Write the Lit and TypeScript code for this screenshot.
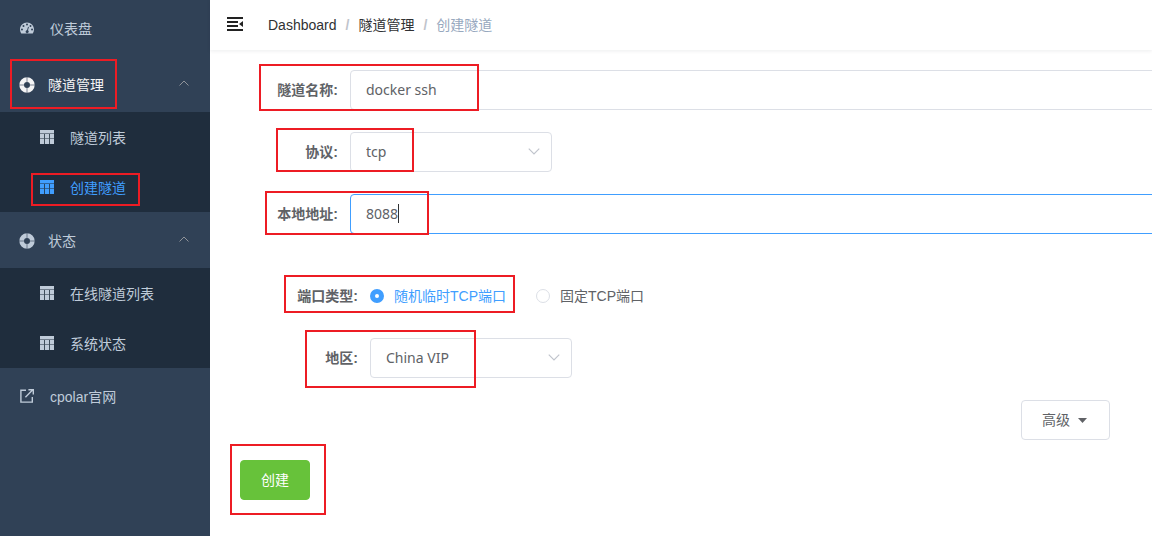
import { LitElement, html, css, svg } from "lit";
import { customElement, state } from "lit/decorators.js";
import { styleMap } from "lit/directives/style-map.js";
import { classMap } from "lit/directives/class-map.js";

const icons = {
  dashboard: html`<svg class="icon" viewBox="0 0 128 128" aria-hidden="true">
    <path fill-rule="evenodd" d="M64 14C29 14 0 42 0 77c0 12 4 24 10 34 1 2 3 3 5 3h98c2 0 4-1 5-3 6-10 10-22 10-34C128 42 99 14 64 14zM18 68a9 9 0 1 1 0 18 9 9 0 0 1 0-18zM32 36a9 9 0 1 1 0 18 9 9 0 0 1 0-18zM64 23a9 9 0 1 1 0 18 9 9 0 0 1 0-18zM96 36a9 9 0 1 1 0 18 9 9 0 0 1 0-18zM110 68a9 9 0 1 1 0 18 9 9 0 0 1 0-18zM78 52c2 1 3 3 3 5l-8 27c6 4 8 11 6 17-2 7-9 12-17 10-7-2-12-9-10-17 2-6 7-10 13-11l7-27c1-3 3-5 6-4z"/>
  </svg>`,
  ring: html`<svg class="icon ring" viewBox="0 0 16 16" aria-hidden="true">
    <path fill-rule="evenodd" d="M8 .3a7.700 7.700 0 1 1 0 15.400A7.700 7.700 0 0 1 8 .3zM8 5a3 3 0 1 0 0 6 3 3 0 0 0 0-6z"/>
    <path class="spokes" d="M8 0v5M8 11v5M0 8h5M11 8h5"/>
  </svg>`,
  table: html`<svg class="icon" viewBox="0 0 14 14" aria-hidden="true">
    <path d="M0 0h14v3H0zM0 4h4v4H0zM0 9h4v5H0zM5 4h4v4H5zM5 9h4v5H5zM10 4h4v4h-4zM10 9h4v5h-4z"/>
    <path opacity="0.5" d="M0 3h14v1H0zM0 8h4v1H0zM5 8h4v1H5zM10 8h4v1h-4z"/>
    <path opacity="0.2" d="M4 4h1v10H4zM9 4h1v10H9z"/>
  </svg>`,
  link: html`<svg class="icon" viewBox="0 0 14 14" fill="none" stroke="currentColor" stroke-width="1.4" aria-hidden="true">
    <path d="M6 1.3H.9v11.8h11.4V8M5.4 8.2l7.4-7.4M8.4.8h4.9v4.6"/>
  </svg>`,
};

const chevron = (cls: string, d: string) =>
  html`<svg class=${cls} viewBox="0 0 12 12" aria-hidden="true">${svg`<path d=${d} />`}</svg>`;

interface Mark { left: number; top: number; width: number; height: number }

const marks: Mark[] = [
  { left: 10, top: 59, width: 107, height: 50 },
  { left: 31, top: 173, width: 109, height: 33 },
  { left: 259, top: 64, width: 220, height: 47 },
  { left: 276, top: 128, width: 138, height: 44 },
  { left: 265, top: 191, width: 164, height: 44 },
  { left: 284, top: 275, width: 231, height: 38 },
  { left: 305, top: 330, width: 171, height: 58 },
  { left: 230, top: 444, width: 96, height: 71 },
];

@customElement("side-menu")
export class SideMenu extends LitElement {
  static styles = css`
    :host { display: block; background: #304156; color: #bfcbd9; font-size: 14px; }
    .list { list-style: none; margin: 0; padding: 0; }
    .item {
      box-sizing: border-box; width: 100%; height: 56px; padding: 2px 20px 0;
      display: flex; align-items: center; gap: 16px;
      border: 0; background: none; color: inherit; font: inherit;
      text-decoration: none; text-align: left; cursor: pointer;
    }
    .group { gap: 13px; padding-left: 19px; }
    .open { color: #f4f4f5; }
    .sub { background: #1f2d3d; }
    .child { height: 50px; padding-left: 40px; }
    .current { color: #409eff; }
    .icon { width: 14px; height: 14px; flex: none; fill: currentColor; margin-bottom: 2px; }
    .icon[fill="none"] { fill: none; }
    .ring { width: 16px; height: 16px; margin-bottom: 0; }
    .spokes { stroke: #304156; stroke-width: 1; opacity: 0.6; }
    .arrow { width: 12px; height: 12px; margin-left: auto; margin-bottom: 4px; fill: none; stroke: #909399; stroke-width: 1; }
  `;

  private group(label: string, open: boolean, children: { label: string; current?: boolean }[]) {
    return html`<li>
      <button class=${classMap({ item: true, group: true, open })} type="button" aria-expanded="true">
        ${icons.ring}<span>${label}</span>${chevron("arrow", "M1.5 8.5L6 4l4.5 4.5")}
      </button>
      <ul class="list sub">
        ${children.map((c) => html`<li>
          <a class=${classMap({ item: true, child: true, current: !!c.current })} href="#">${icons.table}<span>${c.label}</span></a>
        </li>`)}
      </ul>
    </li>`;
  }

  render() {
    return html`<nav><ul class="list">
      <li><a class="item" href="#">${icons.dashboard}<span>仪表盘</span></a></li>
      ${this.group("隧道管理", true, [{ label: "隧道列表" }, { label: "创建隧道", current: true }])}
      ${this.group("状态", false, [{ label: "在线隧道列表" }, { label: "系统状态" }])}
      <li><a class="item" href="#">${icons.link}<span>cpolar官网</span></a></li>
    </ul></nav>`;
  }
}

@customElement("app-root")
export class AppRoot extends LitElement {
  static styles = css`
    :host {
      display: grid; grid-template-columns: 210px minmax(0, 1fr);
      position: relative; min-height: 100vh; overflow: hidden;
      background: #fff; color: #606266; font-size: 14px; line-height: 20px;
      font-family: "Liberation Sans", "Noto Sans CJK SC", sans-serif;
    }
    .bar {
      height: 50px; padding: 0 15px; display: flex; align-items: center; gap: 23px;
      box-shadow: 0 1px 4px rgba(0, 21, 41, 0.08);
    }
    .toggle { border: 0; padding: 0; background: none; display: flex; cursor: pointer; margin-bottom: 2px; }
    .toggle svg { width: 20px; height: 20px; fill: #222; }
    .crumbs { list-style: none; margin: 0; padding: 0; display: flex; }
    .crumbs li + li::before { content: "/"; margin: 0 9px; color: #c0c4cc; font-weight: 700; }
    .crumbs a { color: #303133; text-decoration: none; }
    .here { color: #97a8be; }
    .form { padding: 20px; }
    .row { display: flex; align-items: center; margin-bottom: 22px; }
    .wide { margin-right: -60px; }
    .nested { padding: 20px 22px 0 20px; }
    .label { width: 108px; padding-right: 12px; text-align: right; font-weight: 700; flex: none; }
    .field { position: relative; flex: 1; display: flex; }
    .narrow { flex: 0 0 202px; }
    .control {
      box-sizing: border-box; width: 100%; height: 40px; padding: 0 15px 2px; margin: 0;
      border: 1px solid #dcdfe6; border-radius: 4px; background: #fff; color: #606266; outline: 0;
      font: 14px "Noto Sans", "Noto Sans CJK SC", sans-serif; appearance: none;
    }
    .active { border-color: #409eff; }
    .caret { position: absolute; left: 48px; top: 10px; width: 1px; height: 19px; background: #303133; }
    .down { position: absolute; right: 11px; top: 12px; width: 14px; height: 14px; fill: none; stroke: #c0c4cc; pointer-events: none; }
    .radios { display: flex; gap: 30px; height: 40px; align-items: center; }
    .radio { display: flex; align-items: center; gap: 10px; cursor: pointer; }
    .radio input {
      appearance: none; box-sizing: border-box; width: 14px; height: 14px; margin: 0;
      border: 1px solid #dcdfe6; border-radius: 50%; background: #fff;
    }
    .radio input:checked { border: 5px solid #409eff; }
    .on { color: #409eff; }
    .extra { display: flex; justify-content: flex-end; margin-bottom: 20px; }
    .button {
      height: 40px; padding: 0 20px; border: 1px solid #dcdfe6; border-radius: 4px;
      background: #fff; color: #606266; font: inherit; cursor: pointer;
      display: flex; align-items: center; gap: 8px;
    }
    .button svg { width: 9px; height: 5px; fill: #606266; margin-right: 2px; }
    .create { margin-left: 10px; background: #67c23a; border-color: #67c23a; color: #fff; }
    .mark { position: absolute; box-sizing: border-box; border: 2px solid #ed1c24; pointer-events: none; }
  `;

  @state() private port = "random";

  private radio(value: string, text: string) {
    const on = this.port === value;
    return html`<label class=${classMap({ radio: true, on })}>
      <input type="radio" name="port" .checked=${on} @change=${() => (this.port = value)} />${text}
    </label>`;
  }

  render() {
    const down = chevron("down", "M1.5 4L6 8.5 10.5 4");
    return html`
      <side-menu></side-menu>
      <main>
        <header class="bar">
          <button class="toggle" type="button" aria-label="menu">
            <svg viewBox="0 0 20 20"><path d="M2 3h16v2H2zM2 7h11v2H2zM2 11h11v2H2zM2 15h16v2H2zM18 7v6l-4-3z"/></svg>
          </button>
          <ol class="crumbs">
            <li><a href="#">Dashboard</a></li><li><a href="#">隧道管理</a></li><li><span class="here">创建隧道</span></li>
          </ol>
        </header>
        <form class="form" @submit=${(e: Event) => e.preventDefault()}>
          <div class="row wide">
            <label class="label" for="name">隧道名称:</label>
            <div class="field"><input class="control" id="name" type="text" value="docker ssh" /></div>
          </div>
          <div class="row">
            <label class="label" for="protocol">协议:</label>
            <div class="field narrow"><select class="control" id="protocol"><option>tcp</option></select>${down}</div>
          </div>
          <div class="row wide">
            <label class="label" for="address">本地地址:</label>
            <div class="field"><input class="control active" id="address" type="text" value="8088" /><span class="caret"></span></div>
          </div>
          <div class="nested">
            <div class="row" role="radiogroup" aria-labelledby="port-label">
              <span class="label" id="port-label">端口类型:</span>
              <div class="radios">${this.radio("random", "随机临时TCP端口")}${this.radio("fixed", "固定TCP端口")}</div>
            </div>
            <div class="row">
              <label class="label" for="region">地区:</label>
              <div class="field narrow"><select class="control" id="region"><option>China VIP</option></select>${down}</div>
            </div>
            <div class="extra">
              <button class="button" type="button">高级<svg viewBox="0 0 9 5" aria-hidden="true"><path d="M0 0h9L4.500 5z"/></svg></button>
            </div>
          </div>
          <button class="button create" type="submit">创建</button>
        </form>
      </main>
      ${marks.map((m) => html`<div class="mark" style=${styleMap({
        left: `${m.left}px`, top: `${m.top}px`, width: `${m.width}px`, height: `${m.height}px`,
      })}></div>`)}
    `;
  }
}
